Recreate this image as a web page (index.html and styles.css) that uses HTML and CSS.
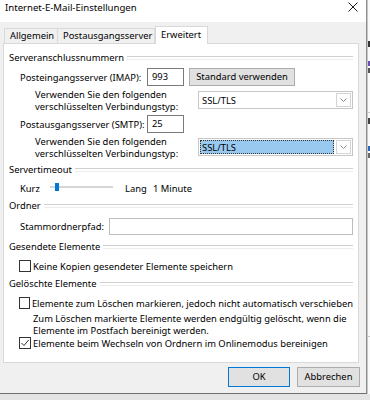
FILE: index.html
```html
<!DOCTYPE html>
<html lang="de">
<head>
    <meta charset="UTF-8">
    <meta name="viewport" content="width=device-width, initial-scale=1.0">
    <link rel="stylesheet" href="styles.css">
</head>
<body>

<div class="screen">
    <div class="dialog">
        <div class="titlebar">
            <span class="title">Internet-E-Mail-Einstellungen</span>
            <svg class="close" width="10" height="10" viewBox="0 0 10 10">
                <path d="M0.5 0.5 L9.5 9.5 M9.5 0.5 L0.5 9.5" stroke="#1a1a1a" stroke-width="1" fill="none"/>
            </svg>
        </div>

        <div class="content">
            <div class="tabs">
                <div class="tab">Allgemein</div>
                <div class="tab">Postausgangsserver</div>
                <div class="tab active">Erweitert</div>
            </div>

            <div class="panel">
                <div class="group first">Serveranschlussnummern</div>

                <div class="row port">
                    <span class="label">Posteingangsserver (IMAP):</span>
                    <span class="textbox small">993</span>
                    <span class="button std">Standard verwenden</span>
                </div>

                <div class="row crypt">
                    <span class="hint">Verwenden Sie den folgenden<br>verschlüsselten Verbindungstyp:</span>
                    <span class="select">
                        <span class="value">SSL/TLS</span>
                        <span class="arrow"><svg width="7" height="4" viewBox="0 0 7 4"><path d="M0.5 0.5 L3.5 3.5 L6.5 0.5" stroke="#8a8a8a" fill="none"/></svg></span>
                    </span>
                </div>

                <div class="row port second">
                    <span class="label">Postausgangsserver (SMTP):</span>
                    <span class="textbox small">25</span>
                </div>

                <div class="row crypt">
                    <span class="hint">Verwenden Sie den folgenden<br>verschlüsselten Verbindungstyp:</span>
                    <span class="select">
                        <span class="value focused">SSL/TLS</span>
                        <span class="arrow"><svg width="7" height="4" viewBox="0 0 7 4"><path d="M0.5 0.5 L3.5 3.5 L6.5 0.5" stroke="#8a8a8a" fill="none"/></svg></span>
                    </span>
                </div>

                <div class="group timeout-head">Servertimeout</div>

                <div class="row timeout">
                    <span class="short">Kurz</span>
                    <span class="slider"><span class="thumb"></span></span>
                    <span class="long">Lang</span>
                    <span>1 Minute</span>
                </div>

                <div class="group">Ordner</div>

                <div class="row folder">
                    <span class="folder-label">Stammordnerpfad:</span>
                    <span class="textbox wide"></span>
                </div>

                <div class="group">Gesendete Elemente</div>

                <div class="row check">
                    <span class="box"></span>
                    <span>Keine Kopien gesendeter Elemente speichern</span>
                </div>

                <div class="group">Gelöschte Elemente</div>

                <div class="row check">
                    <span class="box"></span>
                    <span>Elemente zum Löschen markieren, jedoch nicht automatisch verschieben</span>
                </div>

                <div class="note">Zum Löschen markierte Elemente werden endgültig gelöscht, wenn die<br>Elemente im Postfach bereinigt werden.</div>

                <div class="row check last">
                    <span class="box"><svg width="10" height="10" viewBox="0 0 10 10"><path d="M1.5 5 L4 7.5 L8.8 1.8" stroke="#333" stroke-width="1" fill="none"/></svg></span>
                    <span>Elemente beim Wechseln von Ordnern im Onlinemodus bereinigen</span>
                </div>
            </div>

            <div class="actions">
                <span class="button ok">OK</span>
                <span class="button">Abbrechen</span>
            </div>
        </div>
    </div>

    <div class="behind">
        <span class="mark m1"></span>
        <span class="mark m2"></span>
        <span class="mark m3"></span>
        <span class="rule r1"></span>
        <span class="mark m4"></span>
        <span class="mark m5"></span>
        <span class="mark m6"></span>
        <span class="rule r2"></span>
    </div>
</div>

</body>
</html>
```

FILE: styles.css
```css
* {
    box-sizing: border-box;
}

body {
    margin: 0;
    font-family: "Noto Sans", sans-serif;
    font-size: 9.4px;
    color: #000;
    background-color: #e4e4e4;
    overflow: hidden;
    white-space: nowrap;
}

.screen {
    display: flex;
    width: 370px;
    height: 400px;
}

.dialog {
    width: 367px;
    height: 394px;
    flex: none;
    border-right: 1px solid #8c8c8c;
    border-bottom: 1px solid #707070;
    background-color: #f0f0f0;
    display: flex;
    flex-direction: column;
}

.titlebar {
    height: 22px;
    background-color: #fff;
    display: flex;
    align-items: flex-start;
    padding: 1px 0 0 5px;
}

.title {
    font-size: 9.6px;
    line-height: 14px;
    flex: 1;
}

.close {
    margin: 1px 8px 0 0;
}

.content {
    padding: 4px 0 0 3px;
}

/* tabs */

.tabs {
    display: flex;
    align-items: flex-end;
    height: 17px;
    padding-left: 1px;
    position: relative;
    z-index: 1;
}

.tab {
    height: 15px;
    line-height: 13px;
    padding: 0 5px;
    border: 1px solid #d9d9d9;
    border-bottom: none;
    margin-right: -1px;
    background-color: #f0f0f0;
}

.tab:nth-child(1) {
    width: 54px;
}

.tab:nth-child(2) {
    width: 98px;
}

.tab.active {
    height: 18px;
    width: 53px;
    line-height: 15px;
    margin-bottom: -1px;
    margin-left: 1px;
    background-color: #fff;
}

.panel {
    width: 356px;
    height: 320px;
    border: 1px solid #d9d9d9;
    background-color: #fff;
    padding: 0 5px 0 5px;
    display: flex;
    flex-direction: column;
}

/* group headers */

.group {
    display: flex;
    align-items: center;
    height: 12px;
    line-height: 12px;
    margin-top: 6px;
}

.group::after {
    content: "";
    flex: 1;
    height: 2px;
    margin-left: 3px;
    border-top: 1px solid #d0d0d0;
    border-bottom: 1px solid #ececec;
}

.group.first {
    margin-top: 8px;
}

.group.timeout-head {
    margin-top: 4px;
}

.row {
    display: flex;
    align-items: center;
    padding-left: 11px;
}

/* ports */

.port {
    height: 18px;
    margin-top: 4px;
}

.port.second {
    margin-top: 2px;
}

.label {
    width: 127px;
}

.textbox {
    height: 18px;
    border: 1px solid #7a7a7a;
    background-color: #fff;
    padding: 0 4px;
    line-height: 16px;
}

.textbox.small {
    width: 37px;
}

.button {
    height: 18px;
    border: 1px solid #adadad;
    background-color: #e1e1e1;
    text-align: center;
    line-height: 16px;
}

.button.std {
    width: 106px;
    margin-left: 5px;
}

/* encryption */

.crypt {
    height: 24px;
    margin-top: 3px;
    padding-left: 26px;
}

.hint {
    line-height: 12px;
    flex: 1;
}

.select {
    width: 155px;
    height: 18px;
    border: 1px solid #c6c6c6;
    display: flex;
    padding: 1px;
    margin-top: -2px;
}

.value {
    flex: 1;
    line-height: 14px;
    padding-left: 1px;
    border: 1px solid transparent;
}

.value.focused {
    background-color: #99c9ef;
    border: 1px dotted #333;
}

.arrow {
    width: 15px;
    margin-left: 2px;
    border: 1px solid #d4d4d4;
    background-color: #fff;
    display: flex;
    align-items: center;
    justify-content: center;
}

/* timeout */

.timeout {
    height: 12px;
    margin-top: 6px;
}

.short {
    width: 30px;
}

.slider {
    width: 63px;
    height: 2px;
    background-color: #d6d6d6;
    position: relative;
    margin-top: -2px;
}

.thumb {
    position: absolute;
    left: 5px;
    top: -3px;
    width: 4px;
    height: 8px;
    background-color: #0078d7;
}

.long {
    margin-left: 12px;
    width: 28px;
}

/* folder */

.folder {
    height: 17px;
    margin-top: 6px;
}

.folder-label {
    width: 89px;
}

.textbox.wide {
    flex: 1;
    height: 17px;
    border-color: #bdbdbd;
}

/* checkboxes */

.check {
    height: 12px;
    margin-top: 7px;
    padding-left: 10px;
}

.check.last {
    margin-top: 0;
}

.box {
    width: 12px;
    height: 12px;
    border: 1px solid #333;
    background-color: #fff;
    margin-right: 2px;
    display: flex;
    align-items: center;
    justify-content: center;
}

.note {
    padding-left: 24px;
    margin-top: 4px;
    height: 24px;
    line-height: 12px;
}

/* bottom buttons */

.actions {
    display: flex;
    justify-content: flex-end;
    padding: 4px 6px 0 0;
}

.actions .button {
    width: 63px;
    height: 20px;
    line-height: 18px;
    margin-left: 7px;
}

.actions .button.ok {
    width: 62px;
    border-color: #0078d7;
}

/* window behind */

.behind {
    flex: 1;
    height: 394px;
    background-color: #fafafa;
    border-left: 1px solid #c8c8c8;
    position: relative;
    overflow: hidden;
}

.mark {
    position: absolute;
    left: 0;
    width: 2px;
}

.m1 { top: 41px; height: 6px; background-color: #333; }
.m2 { top: 61px; height: 5px; background-color: #6a4fb0; }
.m3 { top: 68px; height: 5px; background-color: #555; }
.m4 { top: 118px; height: 6px; background-color: #444; }
.m5 { top: 146px; height: 5px; background-color: #2a66b8; }
.m6 { top: 153px; height: 5px; background-color: #666; }

.rule {
    position: absolute;
    left: 0;
    right: 0;
    height: 1px;
    background-color: #c8c8c8;
}

.r1 { top: 112px; }
.r2 { top: 336px; }
```
